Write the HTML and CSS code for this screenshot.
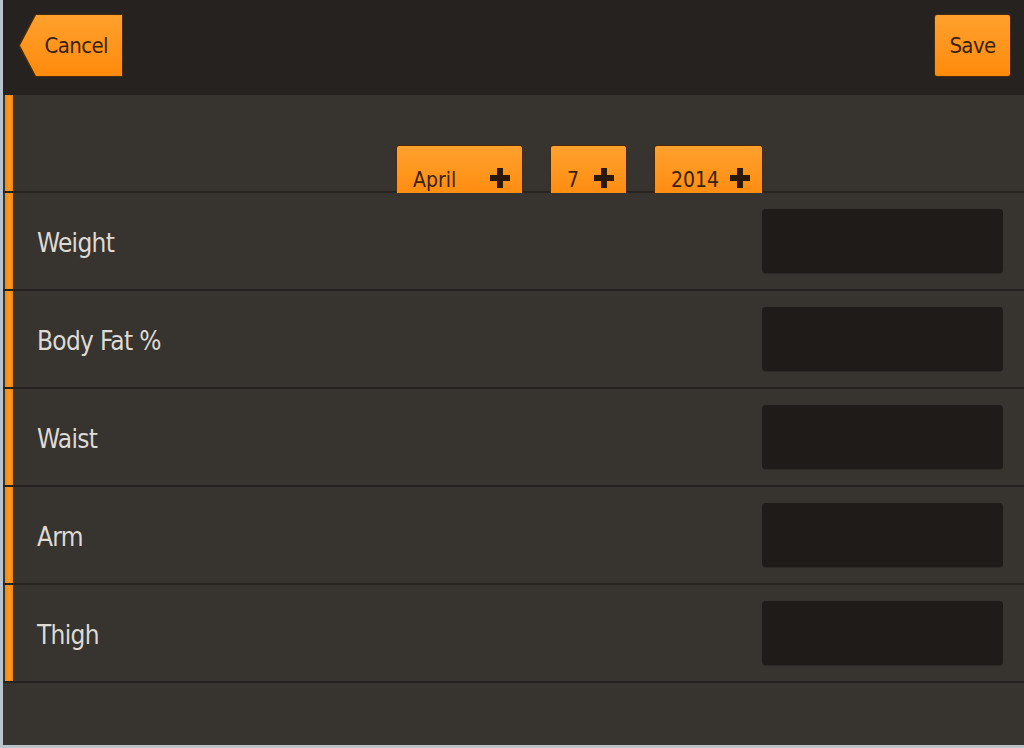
FILE: index.html
```html
<!DOCTYPE html>
<html>
<head>
<meta charset="utf-8">
<link rel="stylesheet" href="styles.css">
</head>
<body>
<div class="frame">
  <header class="topbar">
    <div class="btn-back"><span class="btn-back-inner">Cancel</span></div>
    <div class="btn">Save</div>
  </header>
  <main class="list">
    <div class="row date-row">
      <div class="bar"></div>
      <div class="dates">
        <div class="tab tab-month"><span>April</span><svg class="plus" viewBox="0 0 20 20"><path d="M7 0h6v7h7v6h-7v7H7v-7H0V7h7z"/></svg></div>
        <div class="tab tab-day"><span>7</span><svg class="plus" viewBox="0 0 20 20"><path d="M7 0h6v7h7v6h-7v7H7v-7H0V7h7z"/></svg></div>
        <div class="tab tab-year"><span>2014</span><svg class="plus" viewBox="0 0 20 20"><path d="M7 0h6v7h7v6h-7v7H7v-7H0V7h7z"/></svg></div>
      </div>
    </div>
    <div class="row"><div class="bar"></div><div class="label">Weight</div><div class="field"></div></div>
    <div class="row"><div class="bar"></div><div class="label">Body Fat %</div><div class="field"></div></div>
    <div class="row"><div class="bar"></div><div class="label">Waist</div><div class="field"></div></div>
    <div class="row"><div class="bar"></div><div class="label">Arm</div><div class="field"></div></div>
    <div class="row"><div class="bar"></div><div class="label">Thigh</div><div class="field"></div></div>
  </main>
</div>
</body>
</html>
```
FILE: styles.css
```css
html, body {
  margin: 0;
  padding: 0;
}
body {
  width: 1024px;
  height: 748px;
  overflow: hidden;
  background: #36332f;
  font-family: "DejaVu Sans Condensed", "DejaVu Sans", "Noto Sans", sans-serif;
}
.frame {
  box-sizing: border-box;
  width: 1024px;
  height: 748px;
  border-left: 3px solid #b9c3cc;
  border-bottom: 3px solid #b9c3cc;
  background: #37332f;
  display: flex;
  flex-direction: column;
}
.topbar {
  height: 95px;
  flex: none;
  background: #252220;
  display: flex;
  justify-content: space-between;
  align-items: flex-start;
  padding: 14px 13px 0 15px;
  box-sizing: border-box;
}
.btn-back {
  width: 105px;
  height: 63px;
  background: #4a2a08;
  clip-path: polygon(17px 0, 100% 0, 100% 100%, 17px 100%, 0 50%);
  display: flex;
  padding: 1px;
  box-sizing: border-box;
}
.btn-back-inner {
  flex: 1;
  background: linear-gradient(#ffa12e, #ff8a0c);
  clip-path: polygon(17px 0, 100% 0, 100% 100%, 17px 100%, 1px 50%);
  display: flex;
  align-items: center;
  justify-content: flex-end;
  padding-right: 14px;
  font-size: 22px;
  letter-spacing: -0.6px;
  color: #3a220c;
}
.btn {
  width: 77px;
  height: 63px;
  box-sizing: border-box;
  border: 1px solid #4a2a08;
  border-radius: 3px;
  background: linear-gradient(#ffa12e, #ff8a0c);
  display: flex;
  align-items: center;
  justify-content: center;
  font-size: 22px;
  letter-spacing: -0.6px;
  color: #3a220c;
}
.list {
  display: flex;
  flex-direction: column;
}
.row {
  height: 98px;
  box-sizing: border-box;
  border-bottom: 2px solid #252220;
  display: flex;
  align-items: center;
}
.date-row {
  height: 98px;
  align-items: stretch;
}
.bar {
  width: 8px;
  margin-left: 2px;
  align-self: stretch;
  background: linear-gradient(90deg, #f08a10, #ff9a22 60%, #e88410);
}
.label {
  flex: 1;
  padding-left: 24px;
  padding-top: 4px;
  font-size: 26px;
  letter-spacing: -0.7px;
  color: #dedad4;
}
.field {
  width: 241px;
  height: 64px;
  margin-right: 21px;
  border-radius: 4px;
  background: #1e1b19;
  box-shadow: 0 1px 0 #2c2926;
}
.dates {
  display: flex;
  align-items: flex-end;
  gap: 27px;
  padding-left: 383px;
}
.tab {
  height: 48px;
  box-sizing: border-box;
  border: 1px solid #4a2a08;
  border-bottom: none;
  border-radius: 3px 3px 0 0;
  background: linear-gradient(#ffa12e, #ff8d10);
  display: flex;
  align-items: flex-end;
  padding: 0 12px 0 16px;
  font-size: 21px;
  color: #3a220c;
  margin-bottom: -2px;
}
.tab span {
  flex: 1;
  line-height: 26px;
}
.plus {
  width: 20px;
  height: 20px;
  fill: #2a1808;
  margin-bottom: 5px;
}
.tab-month { width: 127px; }
.tab-day { width: 77px; }
.tab-year { width: 109px; }
.tab-day span { padding-right: 12px; }
```
